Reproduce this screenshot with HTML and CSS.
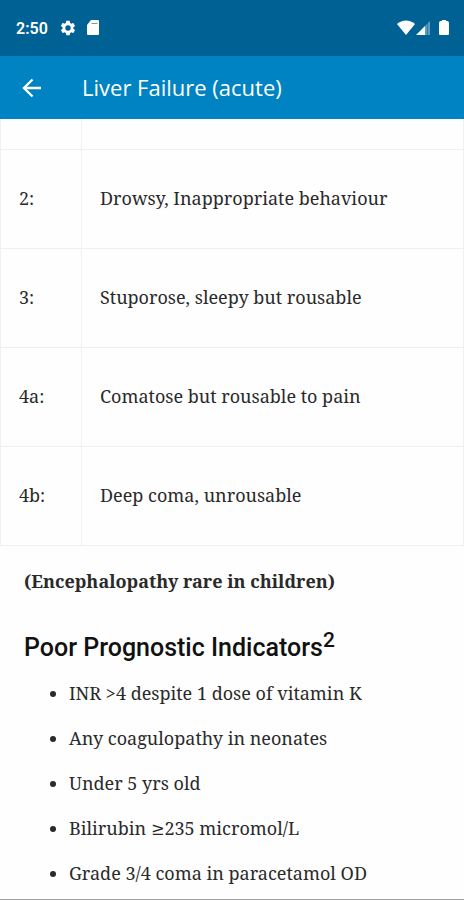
FILE: index.html
```
<!DOCTYPE html>
<html lang="en">
    <head>
        <meta charset="utf-8">
        <meta name="viewport" content="width=device-width, initial-scale=1">
        <title>Liver Failure (acute)</title>
        <link rel="stylesheet" href="styles.css">
    </head>
    <body>
        <div class="status-bar">
            <span class="clock">2:50</span>
            <svg class="gear" width="18" height="18" viewBox="0 0 24 24" fill="#fff">
                <path d="M19.1 12.9a7 7 0 0 0 0-1.8l2-1.6c.2-.1.2-.4.1-.6l-1.9-3.3c-.1-.2-.4-.3-.6-.2l-2.4 1a7 7 0 0 0-1.6-1l-.4-2.5c0-.2-.2-.4-.5-.4h-3.8c-.2 0-.4.2-.5.4l-.4 2.5c-.6.2-1.1.6-1.6 1l-2.4-1c-.2-.1-.5 0-.6.2L2.7 8.9c-.1.2-.1.5.1.6l2 1.6a7 7 0 0 0 0 1.8l-2 1.6c-.2.1-.2.4-.1.6l1.9 3.3c.1.2.4.3.6.2l2.4-1c.5.4 1 .7 1.6 1l.4 2.5c0 .2.2.4.5.4h3.8c.2 0 .4-.2.5-.4l.4-2.5c.6-.2 1.1-.6 1.6-1l2.4 1c.2.1.5 0 .6-.2l1.9-3.3c.1-.2.1-.5-.1-.6zM12 15.6a3.6 3.6 0 1 1 0-7.2 3.6 3.6 0 0 1 0 7.2z"/>
            </svg>
            <svg class="card" width="14" height="16" viewBox="0 0 14 16">
                <path fill="#fff" d="M5 0h7a1 1 0 0 1 1 1v13a1 1 0 0 1-1 1H2a1 1 0 0 1-1-1V5z"/>
                <path stroke="#006294" stroke-opacity=".6" stroke-width="1" d="M5.5 3.5h6"/>
            </svg>
            <div class="status-right">
                <svg width="18" height="16" viewBox="0 0 18 16">
                    <path fill="#fff" d="M0 4C5-.7 13-.7 18 4L9 15z"/>
                </svg>
                <svg width="15" height="16" viewBox="0 0 15 16">
                    <path fill="#fff" d="M0 15L9 6v9z"/>
                    <path fill="#5c9dbd" d="M9 6l5-5v14H9z"/>
                    <path stroke="#006294" stroke-width="1" stroke-opacity=".5" d="M11.5 2v13"/>
                </svg>
                <svg class="battery" width="10" height="16" viewBox="0 0 10 16">
                    <path fill="#fff" d="M3 0h4v1h1a2 2 0 0 1 2 2v11a1 1 0 0 1-1 1H1a1 1 0 0 1-1-1V3a2 2 0 0 1 2-2h1z"/>
                </svg>
            </div>
        </div>

        <header class="app-bar">
            <button type="button" class="back" aria-label="Back">
                <svg width="20" height="20" viewBox="0 0 20 20" fill="none" stroke="#fff" stroke-width="2.4">
                    <path d="M19 10H3M10.5 1.5L2 10l8.5 8.5"/>
                </svg>
            </button>
            <h1 class="title">Liver Failure (acute)</h1>
        </header>

        <main class="content">
            <table class="grades">
                <tr class="row-cut"><td class="grade"></td><td></td></tr>
                <tr><td class="grade">2:</td><td>Drowsy, Inappropriate behaviour</td></tr>
                <tr><td class="grade">3:</td><td>Stuporose, sleepy but rousable</td></tr>
                <tr><td class="grade">4a:</td><td>Comatose but rousable to pain</td></tr>
                <tr><td class="grade">4b:</td><td>Deep coma, unrousable</td></tr>
            </table>

            <p class="note">(Encephalopathy rare in children)</p>

            <h2 class="heading">Poor Prognostic Indicators<sup>2</sup></h2>
            <ul class="indicators">
                <li>INR &gt;4 despite 1 dose of vitamin K</li>
                <li>Any coagulopathy in neonates</li>
                <li>Under 5 yrs old</li>
                <li>Bilirubin ≥235 micromol/L</li>
                <li>Grade 3/4 coma in paracetamol OD</li>
            </ul>
        </main>
    </body>
</html>
```

FILE: styles.css
```
* {
  box-sizing: border-box;
}

body {
  display: flex;
  flex-direction: column;
  min-height: 100vh;
  margin: 0;
  border-bottom: 1px solid #a0a0a0;
  background: #fefefe;
  color: #2a2a2a;
  font-family: "Noto Serif", "DejaVu Serif Condensed", "DejaVu Serif", serif;
  font-size: 18px;
  line-height: 25px;
}

.status-bar {
  display: flex;
  align-items: center;
  height: 56px;
  padding: 0 15px 0 16px;
  background: #006294;
  color: #fff;
}

.clock {
  font-family: Roboto, sans-serif;
  font-size: 16px;
  font-weight: 600;
}

.gear {
  margin-left: 11px;
}

.card {
  margin-left: 9px;
}

.status-right {
  display: flex;
  gap: 1px;
  margin-left: auto;
}

.battery {
  margin-left: 7px;
}

.app-bar {
  display: flex;
  align-items: center;
  height: 63px;
  padding: 0 22px;
  background: #0083c2;
  color: #fff;
}

.back {
  display: flex;
  padding: 0;
  border: 0;
  background: none;
  cursor: pointer;
}

.title {
  margin: 0 0 0 40px;
  font-family: "Open Sans", "Noto Sans", sans-serif;
  font-size: 22px;
  font-weight: 500;
}

.grades {
  width: 100%;
  border-collapse: collapse;
}

.grades td {
  height: 99px;
  padding: 0 18px;
  border: 1px solid #f0f0f0;
}

.grades .grade {
  width: 81px;
}

.grades .row-cut td {
  height: 30px;
  border-top: 0;
}

.note {
  margin: 23px 24px 0;
  font-weight: bold;
}

.heading {
  margin: 36px 24px 0;
  color: #111;
  font-family: Roboto, sans-serif;
  font-size: 25px;
  font-weight: 500;
  line-height: 35px;
}

.heading sup {
  font-size: 21px;
  line-height: 0;
}

.indicators {
  margin: 16px 24px 0;
  padding-left: 45px;
}

.indicators li {
  margin-bottom: 20px;
}

.indicators li:last-child {
  margin-bottom: 0;
}
```
